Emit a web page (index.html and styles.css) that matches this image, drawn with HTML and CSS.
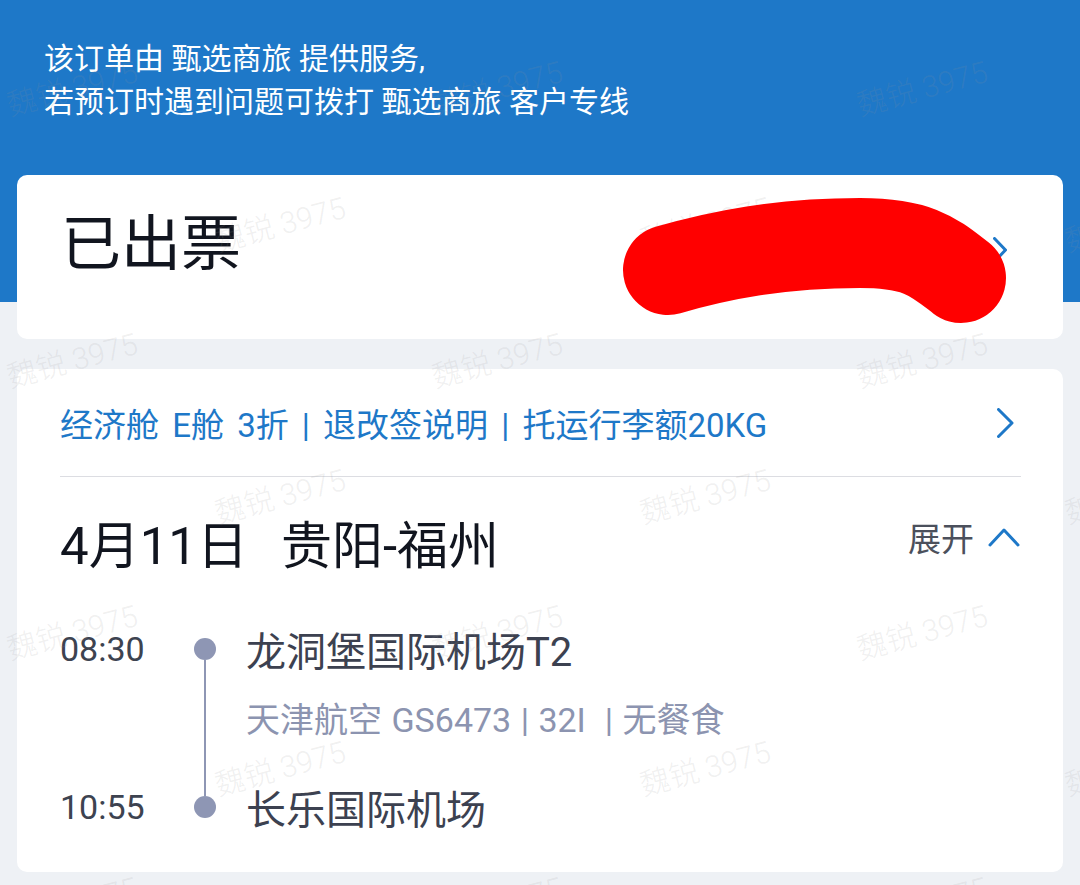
FILE: index.html
```html
<!DOCTYPE html>
<html lang="zh-CN">
<head>
    <meta charset="UTF-8">
    <meta name="viewport" content="width=device-width, initial-scale=1.0">
    <title>订单详情</title>
    <link rel="stylesheet" href="styles.css">
</head>
<body>
    <div class="page">
        <header class="notice">
            <p>该订单由 甄选商旅 提供服务,</p>
            <p>若预订时遇到问题可拨打 甄选商旅 客户专线</p>
        </header>

        <section class="card status">
            <span class="status-text">已出票</span>
            <svg class="arrow-right" width="14" height="26" viewBox="0 0 14 26">
                <polyline points="1.5,1.5 12.5,13 1.5,24.5" />
            </svg>
            <svg class="scribble" viewBox="0 0 1045 164">
                <path d="M651 95 C703 80, 763 68, 843 68 C903 68, 918 83, 944 103" />
            </svg>
        </section>

        <section class="card trip">
            <div class="fare">
                <span>经济舱 E舱 3折 | 退改签说明 | 托运行李额20KG</span>
                <svg class="arrow-right" width="24" height="30" viewBox="0 0 24 30">
                    <polyline points="1.5,1.5 15,15 1.5,28.5" />
                </svg>
            </div>

            <div class="route">
                <h2 class="route-title"><span>4月11日</span><span>贵阳-福州</span></h2>
                <div class="toggle">
                    <span>展开</span>
                    <svg width="32" height="20" viewBox="0 0 32 20">
                        <polyline points="2,18 16,3 30,18" />
                    </svg>
                </div>
            </div>

            <div class="timeline">
                <span class="time t-dep">08:30</span>
                <div class="track"><i class="dot"></i><i class="line"></i><i class="dot"></i></div>
                <span class="stop s-dep">龙洞堡国际机场T2</span>
                <span class="flight">天津航空 GS6473 | 32I &nbsp;| 无餐食</span>
                <span class="time t-arr">10:55</span>
                <span class="stop s-arr">长乐国际机场</span>
            </div>
        </section>

        <div class="watermarks">
            <div class="wm-row odd"><span>魏锐 3975</span><span>魏锐 3975</span><span>魏锐 3975</span></div>
            <div class="wm-row even"><span>魏锐 3975</span><span>魏锐 3975</span><span>魏锐 3975</span></div>
            <div class="wm-row odd"><span>魏锐 3975</span><span>魏锐 3975</span><span>魏锐 3975</span></div>
            <div class="wm-row even"><span>魏锐 3975</span><span>魏锐 3975</span><span>魏锐 3975</span></div>
            <div class="wm-row odd"><span>魏锐 3975</span><span>魏锐 3975</span><span>魏锐 3975</span></div>
            <div class="wm-row even"><span>魏锐 3975</span><span>魏锐 3975</span><span>魏锐 3975</span></div>
            <div class="wm-row odd"><span>魏锐 3975</span><span>魏锐 3975</span><span>魏锐 3975</span></div>
        </div>
    </div>
</body>
</html>
```

FILE: styles.css
```css
* {
    box-sizing: border-box;
}

body {
    margin: 0;
    font-family: Roboto, "Noto Sans CJK SC", sans-serif;
    background-color: #eef1f5;
}

.page {
    position: relative;
    width: 1080px;
    height: 885px;
    overflow: hidden;
    background: linear-gradient(#1e78c8 0, #1e78c8 302px, #eef1f5 302px);
}

.notice {
    padding: 37px 44px 0;
    height: 175px;
    color: #ffffff;
    font-size: 30px;
    line-height: 43px;
}

.notice p {
    margin: 0;
}

.card {
    margin: 0 17px;
    background-color: #ffffff;
    border-radius: 10px;
}

.status {
    position: relative;
    height: 164px;
    padding: 0 56px 0 44px;
    display: flex;
    align-items: center;
    justify-content: space-between;
}

.status-text {
    font-size: 60px;
    line-height: 70px;
    color: #11151f;
    margin-bottom: 24px;
}

.arrow-right polyline,
.toggle polyline {
    fill: none;
    stroke: #1e78c8;
    stroke-width: 3;
    stroke-linecap: round;
    stroke-linejoin: round;
}

.status .arrow-right {
    margin-bottom: 14px;
}

.scribble {
    position: absolute;
    left: 0;
    top: 0;
    width: 1045px;
    height: 164px;
    overflow: visible;
    z-index: 3;
}

.scribble path {
    fill: none;
    stroke: #ff0000;
    stroke-width: 90;
    stroke-linecap: round;
}

.trip {
    margin-top: 30px;
    padding: 0 42px 40px 43px;
}

.fare {
    height: 108px;
    padding-top: 1px;
    display: flex;
    align-items: center;
    justify-content: space-between;
    border-bottom: 1px solid #dcdde2;
    color: #1e78c8;
    font-size: 33px;
    word-spacing: 5px;
}

.route {
    display: flex;
    justify-content: space-between;
    align-items: flex-start;
    padding-top: 38px;
}

.route-title {
    margin: 0;
    display: flex;
    gap: 33px;
    font-size: 51px;
    font-weight: 400;
    line-height: 64px;
    color: #11151f;
}

.toggle {
    display: flex;
    align-items: center;
    gap: 14px;
    height: 44px;
    font-size: 33px;
    color: #4b505c;
    margin-right: 1px;
}

.timeline {
    display: grid;
    grid-template-columns: 104px 82px 1fr;
    grid-template-rows: 50px 108px 50px;
    margin-top: 45px;
    align-items: center;
}

.time {
    font-size: 34px;
    color: #3d4350;
}

.t-dep {
    grid-column: 1;
    grid-row: 1;
}

.t-arr {
    grid-column: 1;
    grid-row: 3;
}

.track {
    grid-column: 2;
    grid-row: 1 / 4;
    align-self: stretch;
    display: flex;
    flex-direction: column;
    align-items: center;
    padding: 14px 0;
}

.dot {
    width: 22px;
    height: 22px;
    border-radius: 50%;
    background-color: #8e96b4;
}

.line {
    flex: 1;
    width: 2px;
    background-color: #8e96b4;
}

.stop {
    font-size: 40px;
    color: #3c4150;
}

.s-dep {
    grid-column: 3;
    grid-row: 1;
}

.s-arr {
    grid-column: 3;
    grid-row: 3;
}

.flight {
    grid-column: 3;
    grid-row: 2;
    align-self: start;
    margin-top: 24px;
    line-height: 44px;
    font-size: 34px;
    word-spacing: 1px;
    color: #8c94b0;
}

.watermarks {
    position: absolute;
    inset: 0;
    z-index: 2;
    pointer-events: none;
    padding-top: 18px;
}

.wm-row {
    display: flex;
    height: 136px;
    align-items: center;
}

.wm-row.odd {
    margin-left: -141px;
}

.wm-row.even {
    margin-left: 67px;
}

.wm-row span {
    flex: 0 0 425px;
    text-align: center;
    font-size: 30px;
    font-weight: 300;
    color: rgba(150, 150, 150, 0.15);
    transform: rotate(-15deg);
    white-space: nowrap;
}
```
